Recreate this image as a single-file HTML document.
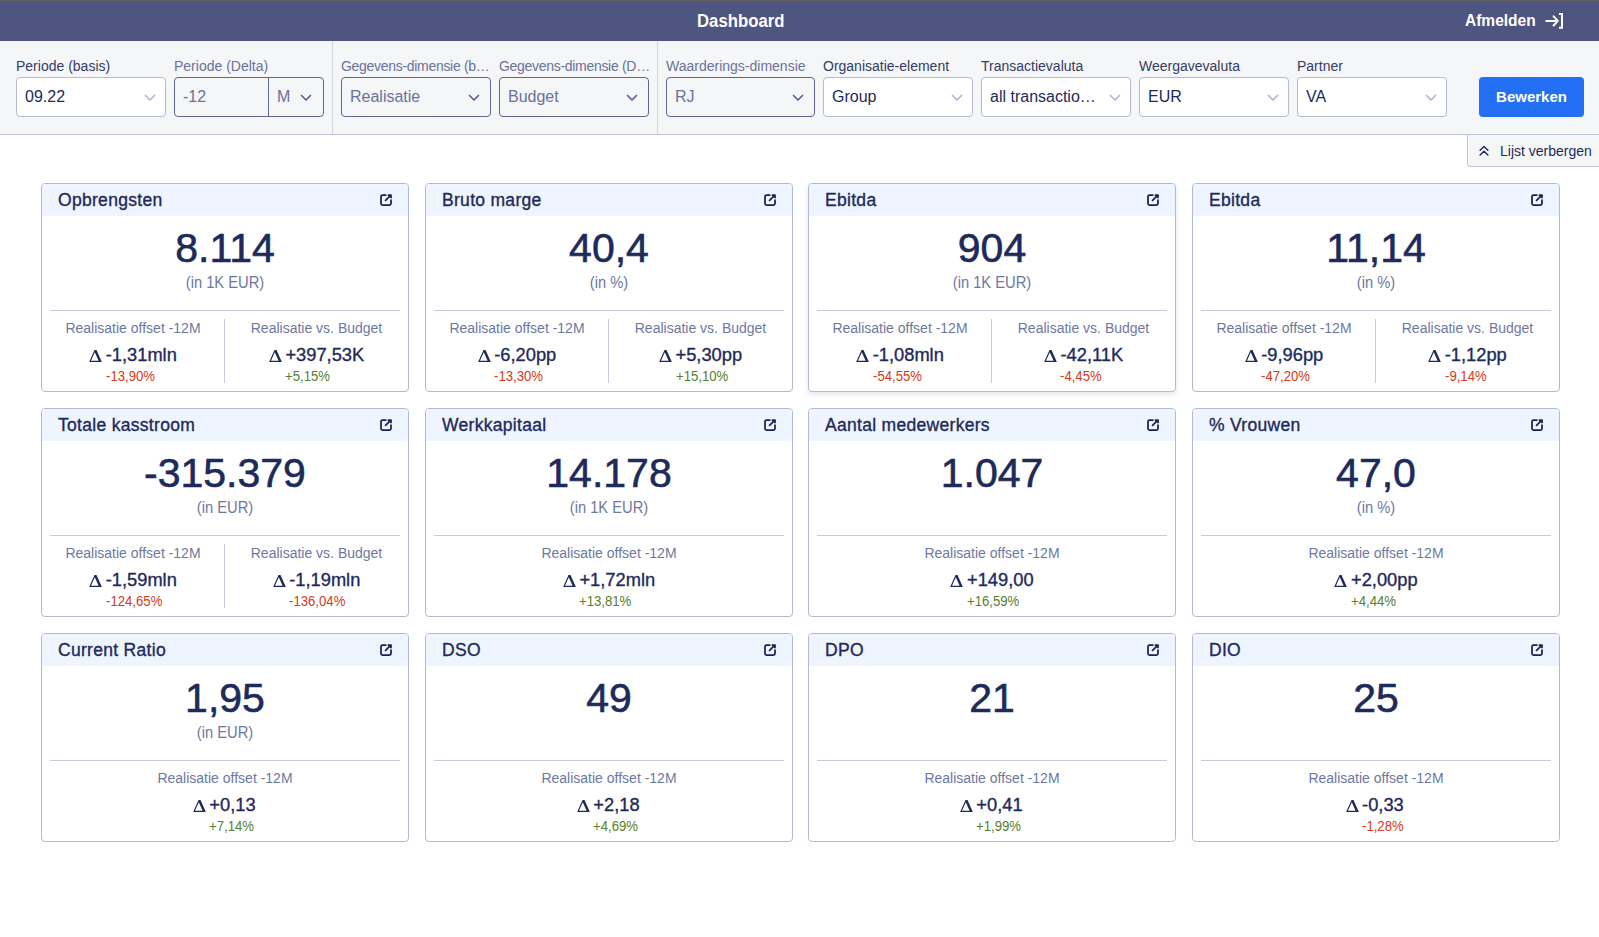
<!DOCTYPE html>
<html><head><meta charset="utf-8"><title>Dashboard</title><style>
*{box-sizing:border-box;margin:0;padding:0}
html,body{width:1599px;height:937px;overflow:hidden;background:#fff;font-family:"Liberation Sans",sans-serif;position:relative}
.a{position:absolute;white-space:nowrap}
.topline{left:0;top:0;width:1599px;height:1px;background:#636363}
.hdr{left:0;top:1px;width:1599px;height:40px;background:#4e5580}
.hdr .t{color:#fff;font-weight:700}
.bar{left:0;top:41px;width:1599px;height:94px;background:#f5f6f8;border-bottom:1px solid #c2c5d6}
.sep{top:41px;width:1px;height:93px;background:#d3d5e1}
.lbl{font-size:14px;line-height:16px;top:58px;color:#353c63}
.lbl.dis{color:#6b7298}
.inp{top:77px;height:40px;border:1px solid #b6bacf;border-radius:4px;background:#fff}
.inp.dis{border-color:#5e6592;background:#f5f6f8}
.inp .v{position:absolute;left:8px;top:10px;font-size:16px;line-height:18px;color:#1e2a5a}
.inp.dis .v{color:#6b7298}
.chev{position:absolute;top:16px;width:12px;height:8px}
.btn{left:1479px;top:77px;width:105px;height:40px;background:#2470f4;border-radius:4px;color:#fff;font-weight:700;font-size:15px;line-height:40px;text-align:center}
.tab{left:1467px;top:135px;width:140px;height:32px;border:1px solid #c2c5d6;border-top:none;border-radius:0 0 0 4px;background:#f5f6f8}
.card{width:368px;height:209px;border:1px solid #b5b9cf;border-radius:4px;background:#fff;overflow:hidden}
.card .hd{position:absolute;left:0;top:0;right:0;height:32px;background:#eff5fe}
.card .ttl{position:absolute;left:16px;top:5.7px;font-size:17.5px;line-height:20px;letter-spacing:0.3px;color:#1e2a5a;font-weight:400;-webkit-text-stroke:0.35px #1e2a5a}
.card .ext{position:absolute;right:16px;top:10px;width:12px;height:12px}
.card .big{position:absolute;left:0;right:0;top:40.5px;text-align:center;font-size:41px;line-height:46px;color:#1e2a5a;font-weight:400;-webkit-text-stroke:0.6px #1e2a5a}
.card .unit{position:absolute;left:0;right:0;top:89.5px;text-align:center;font-size:16px;line-height:18px;color:#6d789f;transform:scaleX(0.92)}
.card .div{position:absolute;left:8px;right:8px;top:126px;height:1px;background:#c9ccdb}
.card .vdiv{position:absolute;left:182px;top:135px;width:1px;height:64px;background:#c9ccdb}
.sec{position:absolute;top:137px;height:70px}
.sec .sl{position:absolute;left:0;right:0;top:-1px;text-align:center;font-size:14px;line-height:16px;color:#6d789f}
.sec .row{position:absolute;left:0;right:0;top:24px;display:flex;justify-content:center}
.sec .tri{width:13px;height:12.3px;margin-top:5.2px;margin-right:3.6px}
.sec .col{display:flex;flex-direction:column;align-items:flex-start}
.sec .val{font-size:18.3px;line-height:20px;color:#1e2a5a;font-weight:400;-webkit-text-stroke:0.35px #1e2a5a}
.sec .pct{display:inline-block;font-size:14px;line-height:16px;margin-top:3px;transform:scaleX(0.94);transform-origin:0 0}
.red{color:#d43a18}
.green{color:#56802a}
</style></head>
<body>
<div class="a topline"></div>
<div class="a hdr"><span class="a t" style="left:697px;top:10px;font-size:18px;line-height:20px;transform:scaleX(0.93);transform-origin:0 0">Dashboard</span><span class="a t" style="left:1465px;top:8.5px;font-size:16.5px;line-height:20px;transform:scaleX(0.94);transform-origin:0 0">Afmelden</span><svg class="a" style="left:1545px;top:11px" width="20" height="18" viewBox="0 0 20 18"><path d="M1.2 8.9 H12 M8.6 4.3 L12.8 8.9 L8.6 13.5" fill="none" stroke="#fff" stroke-width="2" stroke-linecap="round" stroke-linejoin="round"/><path d="M14 2 H17 V15.8 H14" fill="none" stroke="#fff" stroke-width="2" stroke-linecap="butt" stroke-linejoin="miter"/></svg></div>
<div class="a bar"></div>
<div class="a sep" style="left:332px"></div><div class="a sep" style="left:657px"></div>
<div class="a lbl" style="left:16px">Periode (basis)</div>
<div class="a inp" style="left:16px;width:150px"><span class="v">09.22</span><svg class="chev" style="left:127px" viewBox="0 0 12 8"><path d="M1.5 1.5 L6 6 L10.5 1.5" fill="none" stroke="#b3b7cd" stroke-width="1.7" stroke-linecap="round" stroke-linejoin="round"/></svg></div>
<div class="a lbl dis" style="left:174px">Periode (Delta)</div>
<div class="a inp dis" style="left:174px;width:150px"><span class="v">-12</span><div style="position:absolute;left:93px;top:0;width:1px;height:38px;background:#5e6592"></div><span class="v" style="left:102px;color:#6b7298">M</span><svg class="chev" style="left:125px" viewBox="0 0 12 8"><path d="M1.5 1.5 L6 6 L10.5 1.5" fill="none" stroke="#5b6391" stroke-width="1.7" stroke-linecap="round" stroke-linejoin="round"/></svg></div>
<div class="a lbl dis" style="left:341px;letter-spacing:-0.3px">Gegevens-dimensie (b…</div>
<div class="a inp dis" style="left:341px;width:150px"><span class="v">Realisatie</span><svg class="chev" style="left:126px" viewBox="0 0 12 8"><path d="M1.5 1.5 L6 6 L10.5 1.5" fill="none" stroke="#5b6391" stroke-width="1.7" stroke-linecap="round" stroke-linejoin="round"/></svg></div>
<div class="a lbl dis" style="left:499px;letter-spacing:-0.3px">Gegevens-dimensie (D…</div>
<div class="a inp dis" style="left:499px;width:150px"><span class="v">Budget</span><svg class="chev" style="left:126px" viewBox="0 0 12 8"><path d="M1.5 1.5 L6 6 L10.5 1.5" fill="none" stroke="#5b6391" stroke-width="1.7" stroke-linecap="round" stroke-linejoin="round"/></svg></div>
<div class="a lbl dis" style="left:666px">Waarderings-dimensie</div>
<div class="a inp dis" style="left:666px;width:149px"><span class="v">RJ</span><svg class="chev" style="left:125px" viewBox="0 0 12 8"><path d="M1.5 1.5 L6 6 L10.5 1.5" fill="none" stroke="#5b6391" stroke-width="1.7" stroke-linecap="round" stroke-linejoin="round"/></svg></div>
<div class="a lbl" style="left:823px">Organisatie-element</div>
<div class="a inp" style="left:823px;width:150px"><span class="v">Group</span><svg class="chev" style="left:127px" viewBox="0 0 12 8"><path d="M1.5 1.5 L6 6 L10.5 1.5" fill="none" stroke="#b3b7cd" stroke-width="1.7" stroke-linecap="round" stroke-linejoin="round"/></svg></div>
<div class="a lbl" style="left:981px">Transactievaluta</div>
<div class="a inp" style="left:981px;width:150px"><span class="v">all transactio…</span><svg class="chev" style="left:127px" viewBox="0 0 12 8"><path d="M1.5 1.5 L6 6 L10.5 1.5" fill="none" stroke="#b3b7cd" stroke-width="1.7" stroke-linecap="round" stroke-linejoin="round"/></svg></div>
<div class="a lbl" style="left:1139px">Weergavevaluta</div>
<div class="a inp" style="left:1139px;width:150px"><span class="v">EUR</span><svg class="chev" style="left:127px" viewBox="0 0 12 8"><path d="M1.5 1.5 L6 6 L10.5 1.5" fill="none" stroke="#b3b7cd" stroke-width="1.7" stroke-linecap="round" stroke-linejoin="round"/></svg></div>
<div class="a lbl" style="left:1297px">Partner</div>
<div class="a inp" style="left:1297px;width:150px"><span class="v">VA</span><svg class="chev" style="left:127px" viewBox="0 0 12 8"><path d="M1.5 1.5 L6 6 L10.5 1.5" fill="none" stroke="#b3b7cd" stroke-width="1.7" stroke-linecap="round" stroke-linejoin="round"/></svg></div>
<div class="a btn">Bewerken</div>
<div class="a tab"><svg style="position:absolute;left:10px;top:10px" width="13" height="12" viewBox="0 0 13 12.3"><path d="M2 5.3 L6 1.5 L10 5.3 M2 10.3 L6 6.5 L10 10.3" fill="none" stroke="#1e2a5a" stroke-width="1.5" stroke-linecap="round" stroke-linejoin="round"/></svg><span class="a" style="left:32px;top:8px;font-size:14px;line-height:16px;color:#1e2a5a">Lijst verbergen</span></div>
<div class="a card" style="left:41px;top:183px"><div class="hd"></div><div class="ttl">Opbrengsten</div><svg class="ext" viewBox="0 0 12 12"><path d="M5.8 1 H2.6 Q1 1 1 2.6 V9.4 Q1 11 2.6 11 H9.4 Q11 11 11 9.4 V6.2" fill="none" stroke="#18214f" stroke-width="1.75" stroke-linecap="round"/><path d="M5.6 6.4 L10.8 1.2 M8.4 1 H11 V3.6" fill="none" stroke="#18214f" stroke-width="1.75" stroke-linecap="round" stroke-linejoin="round"/></svg><div class="big">8.114</div><div class="unit">(in 1K EUR)</div><div class="div"></div><div class="vdiv"></div><div class="sec" style="left:0px;width:182px"><div class="sl">Realisatie offset -12M</div><div class="row"><svg class="tri" viewBox="0 0 13 12.3"><path d="M0 12.3 L5.5 0 L7.5 0 L13 12.3 Z M1.99 10.8 L9.59 10.8 L5.79 2.3 Z" fill="#1e2a5a" fill-rule="evenodd"/></svg><div class="col"><span class="val">-1,31mln</span><span class="pct red">-13,90%</span></div></div></div><div class="sec" style="left:183px;width:183px"><div class="sl">Realisatie vs. Budget</div><div class="row"><svg class="tri" viewBox="0 0 13 12.3"><path d="M0 12.3 L5.5 0 L7.5 0 L13 12.3 Z M1.99 10.8 L9.59 10.8 L5.79 2.3 Z" fill="#1e2a5a" fill-rule="evenodd"/></svg><div class="col"><span class="val">+397,53K</span><span class="pct green">+5,15%</span></div></div></div></div>
<div class="a card" style="left:425px;top:183px"><div class="hd"></div><div class="ttl">Bruto marge</div><svg class="ext" viewBox="0 0 12 12"><path d="M5.8 1 H2.6 Q1 1 1 2.6 V9.4 Q1 11 2.6 11 H9.4 Q11 11 11 9.4 V6.2" fill="none" stroke="#18214f" stroke-width="1.75" stroke-linecap="round"/><path d="M5.6 6.4 L10.8 1.2 M8.4 1 H11 V3.6" fill="none" stroke="#18214f" stroke-width="1.75" stroke-linecap="round" stroke-linejoin="round"/></svg><div class="big">40,4</div><div class="unit">(in %)</div><div class="div"></div><div class="vdiv"></div><div class="sec" style="left:0px;width:182px"><div class="sl">Realisatie offset -12M</div><div class="row"><svg class="tri" viewBox="0 0 13 12.3"><path d="M0 12.3 L5.5 0 L7.5 0 L13 12.3 Z M1.99 10.8 L9.59 10.8 L5.79 2.3 Z" fill="#1e2a5a" fill-rule="evenodd"/></svg><div class="col"><span class="val">-6,20pp</span><span class="pct red">-13,30%</span></div></div></div><div class="sec" style="left:183px;width:183px"><div class="sl">Realisatie vs. Budget</div><div class="row"><svg class="tri" viewBox="0 0 13 12.3"><path d="M0 12.3 L5.5 0 L7.5 0 L13 12.3 Z M1.99 10.8 L9.59 10.8 L5.79 2.3 Z" fill="#1e2a5a" fill-rule="evenodd"/></svg><div class="col"><span class="val">+5,30pp</span><span class="pct green">+15,10%</span></div></div></div></div>
<div class="a card" style="left:808px;top:183px;box-shadow:0 2px 5px rgba(40,50,90,0.13)"><div class="hd"></div><div class="ttl">Ebitda</div><svg class="ext" viewBox="0 0 12 12"><path d="M5.8 1 H2.6 Q1 1 1 2.6 V9.4 Q1 11 2.6 11 H9.4 Q11 11 11 9.4 V6.2" fill="none" stroke="#18214f" stroke-width="1.75" stroke-linecap="round"/><path d="M5.6 6.4 L10.8 1.2 M8.4 1 H11 V3.6" fill="none" stroke="#18214f" stroke-width="1.75" stroke-linecap="round" stroke-linejoin="round"/></svg><div class="big">904</div><div class="unit">(in 1K EUR)</div><div class="div"></div><div class="vdiv"></div><div class="sec" style="left:0px;width:182px"><div class="sl">Realisatie offset -12M</div><div class="row"><svg class="tri" viewBox="0 0 13 12.3"><path d="M0 12.3 L5.5 0 L7.5 0 L13 12.3 Z M1.99 10.8 L9.59 10.8 L5.79 2.3 Z" fill="#1e2a5a" fill-rule="evenodd"/></svg><div class="col"><span class="val">-1,08mln</span><span class="pct red">-54,55%</span></div></div></div><div class="sec" style="left:183px;width:183px"><div class="sl">Realisatie vs. Budget</div><div class="row"><svg class="tri" viewBox="0 0 13 12.3"><path d="M0 12.3 L5.5 0 L7.5 0 L13 12.3 Z M1.99 10.8 L9.59 10.8 L5.79 2.3 Z" fill="#1e2a5a" fill-rule="evenodd"/></svg><div class="col"><span class="val">-42,11K</span><span class="pct red">-4,45%</span></div></div></div></div>
<div class="a card" style="left:1192px;top:183px"><div class="hd"></div><div class="ttl">Ebitda</div><svg class="ext" viewBox="0 0 12 12"><path d="M5.8 1 H2.6 Q1 1 1 2.6 V9.4 Q1 11 2.6 11 H9.4 Q11 11 11 9.4 V6.2" fill="none" stroke="#18214f" stroke-width="1.75" stroke-linecap="round"/><path d="M5.6 6.4 L10.8 1.2 M8.4 1 H11 V3.6" fill="none" stroke="#18214f" stroke-width="1.75" stroke-linecap="round" stroke-linejoin="round"/></svg><div class="big">11,14</div><div class="unit">(in %)</div><div class="div"></div><div class="vdiv"></div><div class="sec" style="left:0px;width:182px"><div class="sl">Realisatie offset -12M</div><div class="row"><svg class="tri" viewBox="0 0 13 12.3"><path d="M0 12.3 L5.5 0 L7.5 0 L13 12.3 Z M1.99 10.8 L9.59 10.8 L5.79 2.3 Z" fill="#1e2a5a" fill-rule="evenodd"/></svg><div class="col"><span class="val">-9,96pp</span><span class="pct red">-47,20%</span></div></div></div><div class="sec" style="left:183px;width:183px"><div class="sl">Realisatie vs. Budget</div><div class="row"><svg class="tri" viewBox="0 0 13 12.3"><path d="M0 12.3 L5.5 0 L7.5 0 L13 12.3 Z M1.99 10.8 L9.59 10.8 L5.79 2.3 Z" fill="#1e2a5a" fill-rule="evenodd"/></svg><div class="col"><span class="val">-1,12pp</span><span class="pct red">-9,14%</span></div></div></div></div>
<div class="a card" style="left:41px;top:408px"><div class="hd"></div><div class="ttl">Totale kasstroom</div><svg class="ext" viewBox="0 0 12 12"><path d="M5.8 1 H2.6 Q1 1 1 2.6 V9.4 Q1 11 2.6 11 H9.4 Q11 11 11 9.4 V6.2" fill="none" stroke="#18214f" stroke-width="1.75" stroke-linecap="round"/><path d="M5.6 6.4 L10.8 1.2 M8.4 1 H11 V3.6" fill="none" stroke="#18214f" stroke-width="1.75" stroke-linecap="round" stroke-linejoin="round"/></svg><div class="big">-315.379</div><div class="unit">(in EUR)</div><div class="div"></div><div class="vdiv"></div><div class="sec" style="left:0px;width:182px"><div class="sl">Realisatie offset -12M</div><div class="row"><svg class="tri" viewBox="0 0 13 12.3"><path d="M0 12.3 L5.5 0 L7.5 0 L13 12.3 Z M1.99 10.8 L9.59 10.8 L5.79 2.3 Z" fill="#1e2a5a" fill-rule="evenodd"/></svg><div class="col"><span class="val">-1,59mln</span><span class="pct red">-124,65%</span></div></div></div><div class="sec" style="left:183px;width:183px"><div class="sl">Realisatie vs. Budget</div><div class="row"><svg class="tri" viewBox="0 0 13 12.3"><path d="M0 12.3 L5.5 0 L7.5 0 L13 12.3 Z M1.99 10.8 L9.59 10.8 L5.79 2.3 Z" fill="#1e2a5a" fill-rule="evenodd"/></svg><div class="col"><span class="val">-1,19mln</span><span class="pct red">-136,04%</span></div></div></div></div>
<div class="a card" style="left:425px;top:408px"><div class="hd"></div><div class="ttl">Werkkapitaal</div><svg class="ext" viewBox="0 0 12 12"><path d="M5.8 1 H2.6 Q1 1 1 2.6 V9.4 Q1 11 2.6 11 H9.4 Q11 11 11 9.4 V6.2" fill="none" stroke="#18214f" stroke-width="1.75" stroke-linecap="round"/><path d="M5.6 6.4 L10.8 1.2 M8.4 1 H11 V3.6" fill="none" stroke="#18214f" stroke-width="1.75" stroke-linecap="round" stroke-linejoin="round"/></svg><div class="big">14.178</div><div class="unit">(in 1K EUR)</div><div class="div"></div><div class="sec" style="left:0px;width:366px"><div class="sl">Realisatie offset -12M</div><div class="row"><svg class="tri" viewBox="0 0 13 12.3"><path d="M0 12.3 L5.5 0 L7.5 0 L13 12.3 Z M1.99 10.8 L9.59 10.8 L5.79 2.3 Z" fill="#1e2a5a" fill-rule="evenodd"/></svg><div class="col"><span class="val">+1,72mln</span><span class="pct green">+13,81%</span></div></div></div></div>
<div class="a card" style="left:808px;top:408px"><div class="hd"></div><div class="ttl">Aantal medewerkers</div><svg class="ext" viewBox="0 0 12 12"><path d="M5.8 1 H2.6 Q1 1 1 2.6 V9.4 Q1 11 2.6 11 H9.4 Q11 11 11 9.4 V6.2" fill="none" stroke="#18214f" stroke-width="1.75" stroke-linecap="round"/><path d="M5.6 6.4 L10.8 1.2 M8.4 1 H11 V3.6" fill="none" stroke="#18214f" stroke-width="1.75" stroke-linecap="round" stroke-linejoin="round"/></svg><div class="big">1.047</div><div class="div"></div><div class="sec" style="left:0px;width:366px"><div class="sl">Realisatie offset -12M</div><div class="row"><svg class="tri" viewBox="0 0 13 12.3"><path d="M0 12.3 L5.5 0 L7.5 0 L13 12.3 Z M1.99 10.8 L9.59 10.8 L5.79 2.3 Z" fill="#1e2a5a" fill-rule="evenodd"/></svg><div class="col"><span class="val">+149,00</span><span class="pct green">+16,59%</span></div></div></div></div>
<div class="a card" style="left:1192px;top:408px"><div class="hd"></div><div class="ttl">% Vrouwen</div><svg class="ext" viewBox="0 0 12 12"><path d="M5.8 1 H2.6 Q1 1 1 2.6 V9.4 Q1 11 2.6 11 H9.4 Q11 11 11 9.4 V6.2" fill="none" stroke="#18214f" stroke-width="1.75" stroke-linecap="round"/><path d="M5.6 6.4 L10.8 1.2 M8.4 1 H11 V3.6" fill="none" stroke="#18214f" stroke-width="1.75" stroke-linecap="round" stroke-linejoin="round"/></svg><div class="big">47,0</div><div class="unit">(in %)</div><div class="div"></div><div class="sec" style="left:0px;width:366px"><div class="sl">Realisatie offset -12M</div><div class="row"><svg class="tri" viewBox="0 0 13 12.3"><path d="M0 12.3 L5.5 0 L7.5 0 L13 12.3 Z M1.99 10.8 L9.59 10.8 L5.79 2.3 Z" fill="#1e2a5a" fill-rule="evenodd"/></svg><div class="col"><span class="val">+2,00pp</span><span class="pct green">+4,44%</span></div></div></div></div>
<div class="a card" style="left:41px;top:633px"><div class="hd"></div><div class="ttl">Current Ratio</div><svg class="ext" viewBox="0 0 12 12"><path d="M5.8 1 H2.6 Q1 1 1 2.6 V9.4 Q1 11 2.6 11 H9.4 Q11 11 11 9.4 V6.2" fill="none" stroke="#18214f" stroke-width="1.75" stroke-linecap="round"/><path d="M5.6 6.4 L10.8 1.2 M8.4 1 H11 V3.6" fill="none" stroke="#18214f" stroke-width="1.75" stroke-linecap="round" stroke-linejoin="round"/></svg><div class="big">1,95</div><div class="unit">(in EUR)</div><div class="div"></div><div class="sec" style="left:0px;width:366px"><div class="sl">Realisatie offset -12M</div><div class="row"><svg class="tri" viewBox="0 0 13 12.3"><path d="M0 12.3 L5.5 0 L7.5 0 L13 12.3 Z M1.99 10.8 L9.59 10.8 L5.79 2.3 Z" fill="#1e2a5a" fill-rule="evenodd"/></svg><div class="col"><span class="val">+0,13</span><span class="pct green">+7,14%</span></div></div></div></div>
<div class="a card" style="left:425px;top:633px"><div class="hd"></div><div class="ttl">DSO</div><svg class="ext" viewBox="0 0 12 12"><path d="M5.8 1 H2.6 Q1 1 1 2.6 V9.4 Q1 11 2.6 11 H9.4 Q11 11 11 9.4 V6.2" fill="none" stroke="#18214f" stroke-width="1.75" stroke-linecap="round"/><path d="M5.6 6.4 L10.8 1.2 M8.4 1 H11 V3.6" fill="none" stroke="#18214f" stroke-width="1.75" stroke-linecap="round" stroke-linejoin="round"/></svg><div class="big">49</div><div class="div"></div><div class="sec" style="left:0px;width:366px"><div class="sl">Realisatie offset -12M</div><div class="row"><svg class="tri" viewBox="0 0 13 12.3"><path d="M0 12.3 L5.5 0 L7.5 0 L13 12.3 Z M1.99 10.8 L9.59 10.8 L5.79 2.3 Z" fill="#1e2a5a" fill-rule="evenodd"/></svg><div class="col"><span class="val">+2,18</span><span class="pct green">+4,69%</span></div></div></div></div>
<div class="a card" style="left:808px;top:633px"><div class="hd"></div><div class="ttl">DPO</div><svg class="ext" viewBox="0 0 12 12"><path d="M5.8 1 H2.6 Q1 1 1 2.6 V9.4 Q1 11 2.6 11 H9.4 Q11 11 11 9.4 V6.2" fill="none" stroke="#18214f" stroke-width="1.75" stroke-linecap="round"/><path d="M5.6 6.4 L10.8 1.2 M8.4 1 H11 V3.6" fill="none" stroke="#18214f" stroke-width="1.75" stroke-linecap="round" stroke-linejoin="round"/></svg><div class="big">21</div><div class="div"></div><div class="sec" style="left:0px;width:366px"><div class="sl">Realisatie offset -12M</div><div class="row"><svg class="tri" viewBox="0 0 13 12.3"><path d="M0 12.3 L5.5 0 L7.5 0 L13 12.3 Z M1.99 10.8 L9.59 10.8 L5.79 2.3 Z" fill="#1e2a5a" fill-rule="evenodd"/></svg><div class="col"><span class="val">+0,41</span><span class="pct green">+1,99%</span></div></div></div></div>
<div class="a card" style="left:1192px;top:633px"><div class="hd"></div><div class="ttl">DIO</div><svg class="ext" viewBox="0 0 12 12"><path d="M5.8 1 H2.6 Q1 1 1 2.6 V9.4 Q1 11 2.6 11 H9.4 Q11 11 11 9.4 V6.2" fill="none" stroke="#18214f" stroke-width="1.75" stroke-linecap="round"/><path d="M5.6 6.4 L10.8 1.2 M8.4 1 H11 V3.6" fill="none" stroke="#18214f" stroke-width="1.75" stroke-linecap="round" stroke-linejoin="round"/></svg><div class="big">25</div><div class="div"></div><div class="sec" style="left:0px;width:366px"><div class="sl">Realisatie offset -12M</div><div class="row"><svg class="tri" viewBox="0 0 13 12.3"><path d="M0 12.3 L5.5 0 L7.5 0 L13 12.3 Z M1.99 10.8 L9.59 10.8 L5.79 2.3 Z" fill="#1e2a5a" fill-rule="evenodd"/></svg><div class="col"><span class="val">-0,33</span><span class="pct red">-1,28%</span></div></div></div></div>
</body></html>
